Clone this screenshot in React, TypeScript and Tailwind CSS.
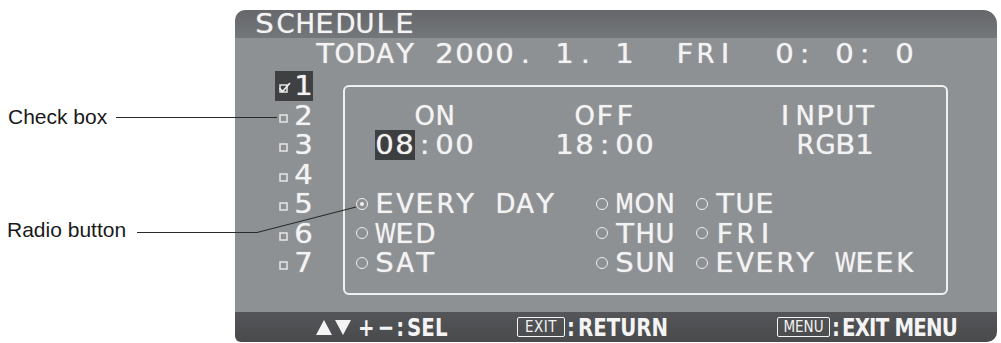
import React from "react";

const OSD = { fontFamily: '"DejaVu Sans", sans-serif' };

const WIDE = "ACDGHKNOQRUVX";

function Radio({ on }: { on?: boolean }) {
  return (
    <span className="w-[20px] h-[29.5px] inline-flex items-center shrink-0">
      <span className="ml-[1px] w-[12px] h-[12px] rounded-full border-[1.5px] border-[#eeeeee] flex items-center justify-center">
        {on ? <span className="w-[4px] h-[4px] rounded-full bg-[#f2f2f2]" /> : null}
      </span>
    </span>
  );
}

function Cell({ c, hi }: { c: string; hi?: boolean }) {
  let sc = "scale-x-[1.08]";
  if (c === "M" || c === "W") sc = "scale-x-[0.8]";
  else if (WIDE.includes(c)) sc = "scale-x-[0.96]";
  return (
    <span
      className={
        "w-[20px] h-full inline-flex items-center justify-center shrink-0 " +
        (hi ? "bg-[#3d3e40]" : "")
      }
    >
      <span className={"inline-block [text-shadow:0_0_1px_rgba(255,255,255,0.7)] " + sc}>
        {c === " " ? "\u00A0" : c}
      </span>
    </span>
  );
}

function GridRow({ text, hi = [], h = "h-[29.5px]" }: { text: string; hi?: number[]; h?: string }) {
  const chars = [...text];
  return (
    <div className={"flex items-center " + h}>
      {chars.map((c, i) => {
        if (c === "○") return <Radio key={i} />;
        if (c === "◉") return <Radio key={i} on />;
        return <Cell key={i} c={c} hi={hi.includes(i)} />;
      })}
    </div>
  );
}

function CheckBox({ checked }: { checked?: boolean }) {
  return (
    <span className="w-[20px] h-[29.5px] inline-flex items-center">
      <svg width="16" height="16" viewBox="0 0 16 16" className="ml-[2px] mt-[5px]">
        <rect x="3" y="5" width="7" height="7" fill="none" stroke="#e6e6e6" strokeWidth="1.5" />
        {checked ? (
          <path d="M2.5 8 L5.5 11.5 L13 3" fill="none" stroke="#f2f2f2" strokeWidth="1.6" />
        ) : null}
      </svg>
    </span>
  );
}

function Tri({ down }: { down?: boolean }) {
  return (
    <svg width="18" height="17" viewBox="0 0 18 17" className="mr-[1px]">
      {down ? (
        <polygon points="1,1 17,1 9,16" fill="#f4f4f4" />
      ) : (
        <polygon points="9,1 17,16 1,16" fill="#f4f4f4" />
      )}
    </svg>
  );
}

export default function App() {
  const nums = ["1", "2", "3", "4", "5", "6", "7"];
  return (
    <div className="relative w-[1001px] h-[343px] bg-white flex overflow-hidden">
      {/* annotations */}
      <div
        className="w-[235px] h-full flex flex-col text-[21px] text-[#1a1a1a]"
        style={{ fontFamily: '"Liberation Sans", Arial, sans-serif' }}
      >
        <div className="pl-[8px] mt-[104px] h-[26px] leading-[26px]">Check box</div>
        <div className="pl-[7px] mt-[87px] h-[26px] leading-[26px]">Radio button</div>
      </div>

      {/* panel */}
      <div
        className="mt-[10px] w-[762px] h-[332px] flex flex-col text-[#f3f3f3]"
        style={OSD}
      >
        <div className="h-[28px] rounded-tl-[10px] rounded-tr-[14px] bg-gradient-to-b from-[#65676a] to-[#74777a] flex items-center pl-[20px] text-[27px] leading-[28px]">
          <GridRow text="SCHEDULE" h="h-[28px]" />
        </div>
        <div className="flex-1 bg-[#8e9193] text-[27px] leading-[29.5px]">
          <div className="h-[32px] flex items-center pl-[80px]">
            <GridRow text="TODAY 2000. 1. 1  FRI  0: 0: 0" h="h-[32px]" />
          </div>
          <div className="flex items-start">
            <div className="pl-[40px] pt-[1px] flex flex-col">
              {nums.map((n, i) => (
                <div
                  key={n}
                  className={"flex w-[38px] h-[29.5px] " + (i === 0 ? "bg-[#3f4042]" : "")}
                >
                  <CheckBox checked={i === 0} />
                  <span className="w-[18px] h-[29.5px] flex items-center justify-center">
                    <span className="inline-block scale-x-[1.08] [text-shadow:0_0_1px_rgba(255,255,255,0.7)]">
                      {n}
                    </span>
                  </span>
                </div>
              ))}
            </div>
            <div className="ml-[30px] mt-[15px] w-[605px] h-[210px] border-2 border-[#f0f0f0] rounded-[6px] pl-[10px] pt-[13.5px]">
              <GridRow text="   ON      OFF       INPUT" />
              <GridRow text=" 08:00    18:00       RGB1" hi={[1, 2]} />
              <GridRow text=" " />
              <GridRow text="◉EVERY DAY  ○MON ○TUE" />
              <GridRow text="○WED        ○THU ○FRI" />
              <GridRow text="○SAT        ○SUN ○EVERY WEEK" />
            </div>
          </div>
        </div>
        <div
          className="h-[30px] rounded-bl-[6px] rounded-br-[10px] bg-gradient-to-b from-[#535558] to-[#484a4c] flex items-center pl-[80px] text-[22px] font-bold text-[#f4f4f4]"
          style={{ fontFamily: '"DejaVu Sans Condensed", "DejaVu Sans", sans-serif' }}
        >
          <div className="w-[202px] flex items-center">
            <Tri />
            <Tri down />
            <span className="ml-[5px] inline-block scale-y-[1.15]">+</span>
            <span className="ml-[3px] inline-block scale-y-[1.15]">−</span>
            <span className="ml-[2px] inline-block scale-y-[1.15]">:</span>
            <span className="ml-[3px] inline-block scale-y-[1.15]">SEL</span>
          </div>
          <div className="w-[260px] flex items-center">
            <span className="border-[1.5px] border-[#f4f4f4] rounded-[2px] h-[20px] w-[48px] flex items-center justify-center text-[15px] leading-none font-normal tracking-[0.5px]">
              EXIT
            </span>
            <span className="ml-[2px] inline-block scale-y-[1.15]">:</span>
            <span className="ml-[3px] inline-block scale-y-[1.15]">RETURN</span>
          </div>
          <div className="flex items-center">
            <span className="border-[1.5px] border-[#f4f4f4] rounded-[2px] h-[20px] w-[53px] flex items-center justify-center text-[15px] leading-none font-normal">
              MENU
            </span>
            <span className="ml-[2px] inline-block scale-y-[1.15]">:</span>
            <span className="ml-[2px] tracking-[-0.8px] inline-block scale-y-[1.15]">EXIT MENU</span>
          </div>
        </div>
      </div>

      {/* leader lines */}
      <svg className="absolute inset-0 pointer-events-none" width="1001" height="343">
        <line x1="116" y1="117.5" x2="277" y2="117.5" stroke="#2a2a2a" strokeWidth="1.2" />
        <polyline points="137,232.5 257,232.5 356,207" fill="none" stroke="#2a2a2a" strokeWidth="1.2" />
      </svg>
    </div>
  );
}
